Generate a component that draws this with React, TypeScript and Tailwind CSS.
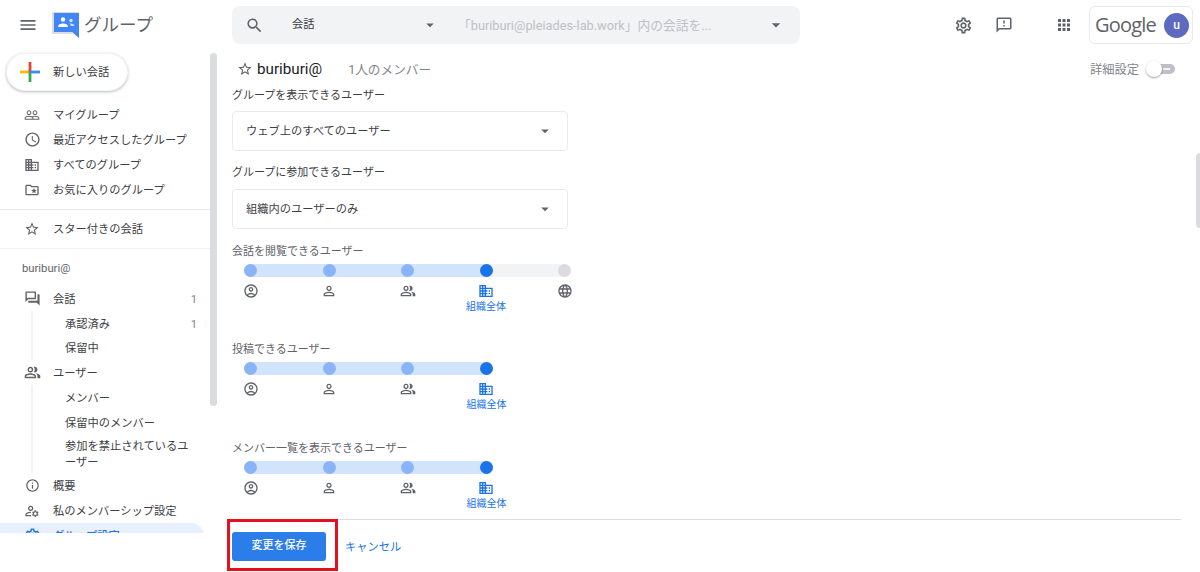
import React from 'react'
import {
  MdMenu, MdPeopleOutline, MdAccessTime, MdBusiness, MdOutlineFolderSpecial, MdStarBorder,
  MdOutlineForum, MdOutlinePeopleAlt, MdInfoOutline, MdOutlineManageAccounts, MdOutlineSettings,
  MdSearch, MdArrowDropDown, MdOutlineFeedback, MdApps, MdOutlineAccountCircle, MdPersonOutline,
  MdLanguage, MdDomain,
} from 'react-icons/md'

const font = { fontFamily: '"Roboto", "Noto Sans CJK JP", sans-serif' }

function NavRow({ icon, label, count, active }: { icon?: React.ReactNode; label: string; count?: string; active?: boolean }) {
  return (
    <div className={`flex h-[25px] items-center rounded-r-full pl-[23px] text-[11.25px] ${active ? 'mr-[6px] bg-[#e8f0fe] pr-[7px] font-medium text-[#1a73e8]' : 'pr-[13px] text-[#3c4043]'}`}>
      <span className={`flex w-[18px] shrink-0 justify-center ${active ? 'text-[#1a73e8]' : 'text-[#5f6368]'}`}>{icon}</span>
      <span className="ml-[12px] flex-1 pt-[4px]">{label}</span>
      {count && <span className="pt-[4px] text-[#80868b]">{count}</span>}
    </div>
  )
}

function SubNav({ items }: { items: { label: string; count?: string }[] }) {
  return (
    <div className="ml-[31px] border-l-2 border-[#f1f3f4] pl-[32px] pr-[13px]">
      {items.map((item) => (
        <div key={item.label} className="flex min-h-[24.6px] items-center py-[2px] text-[11.25px] leading-[16px] text-[#3c4043]">
          <span className="flex-1 pt-[3px]">{item.label}</span>
          {item.count && <span className="pt-[3px] text-[#80868b]">{item.count}</span>}
        </div>
      ))}
    </div>
  )
}

function Sidebar() {
  return (
    <aside className="flex h-[483px] w-[218px] shrink-0">
      <div className="w-[210px] overflow-hidden">
        <button className="ml-[6px] mt-[3px] flex h-[38px] w-[122px] items-center rounded-full border border-[#f1f3f4] bg-white pl-[13px] text-[11.25px] text-[#3c4043] shadow-[0_1px_3px_rgba(60,64,67,0.35)]">
          <svg width="20" height="20" viewBox="0 0 20 20" className="mr-[13px]">
            <rect x="0" y="8.6" width="10" height="2.8" fill="#fbbc04" />
            <rect x="8.6" y="0" width="2.8" height="10" fill="#ea4335" />
            <rect x="8.6" y="10" width="2.8" height="10" fill="#34a853" />
            <rect x="10" y="8.6" width="10" height="2.8" fill="#4285f4" />
          </svg>
          <span className="pt-[2px]">新しい会話</span>
        </button>
        <div className="mt-[11px]">
          <NavRow icon={<MdPeopleOutline size={16} />} label="マイグループ" />
          <NavRow icon={<MdAccessTime size={17} />} label="最近アクセスしたグループ" />
          <NavRow icon={<MdBusiness size={16} />} label="すべてのグループ" />
          <NavRow icon={<MdOutlineFolderSpecial size={16} />} label="お気に入りのグループ" />
        </div>
        <div className="mt-[7px] border-t border-[#e8eaed] pt-[6px]">
          <NavRow icon={<MdStarBorder size={16} />} label="スター付きの会話" />
        </div>
        <div className="mt-[7px] border-t border-[#f1f3f4] pl-[22px] pt-[13px] text-[11.25px] leading-[14px] text-[#5f6368]">buriburi@</div>
        <div className="mt-[10px]">
          <NavRow icon={<MdOutlineForum size={17} />} label="会話" count="1" />
          <SubNav items={[{ label: '承認済み', count: '1' }, { label: '保留中' }]} />
          <NavRow icon={<MdOutlinePeopleAlt size={17} />} label="ユーザー" />
          <SubNav items={[{ label: 'メンバー' }, { label: '保留中のメンバー' }, { label: '参加を禁止されているユーザー' }]} />
          <NavRow icon={<MdInfoOutline size={15} />} label="概要" />
          <NavRow icon={<MdOutlineManageAccounts size={16} />} label="私のメンバーシップ設定" />
          <NavRow icon={<MdOutlineSettings size={17} />} label="グループ設定" active />
        </div>
      </div>
      <div className="mt-[3px] h-[353px] w-[7px] rounded-full bg-[#dadce0]" />
    </aside>
  )
}

function Header() {
  return (
    <header className="flex h-[50px] shrink-0 items-center">
      <div className="flex w-[232px] shrink-0 items-center">
        <MdMenu size={20} className="ml-[18px] text-[#5f6368]" />
        <svg width="27" height="26" viewBox="0 0 27 26" className="ml-[14px]">
          <path d="M0 0h27v20h-7v2H0z" fill="#dadce0" />
          <path d="M2 1h25v25l-7-6H2z" fill="#4285f4" />
          <circle cx="11" cy="7.500" r="2.200" fill="#fff" />
          <path d="M6 15c0-2.500 2.500-3.500 5-3.500s5 1 5 3.500z" fill="#fff" />
          <circle cx="19" cy="8.500" r="1.700" fill="#d2e3fc" />
          <path d="M17.500 11.500c2.500-.3 5 .5 5 2.500h-3.500c-.2-1-.7-1.800-1.500-2.500z" fill="#d2e3fc" />
        </svg>
        <span className="ml-[5px] pt-[1px] text-[17.5px] text-[#5f6368]">グループ</span>
      </div>
      <div className="flex h-[38px] w-[568px] items-center rounded-lg bg-[#f1f3f4]">
        <MdSearch size={19} className="ml-[13px] text-[#5f6368]" />
        <span className="ml-[28px] w-[129px] pt-[1px] text-[11.25px] text-[#3c4043]">会話</span>
        <MdArrowDropDown size={18} className="text-[#5f6368]" />
        <span className="ml-[19px] w-[308px] whitespace-nowrap pt-[1px] text-[12.75px] text-[#bdc1c6]">「buriburi@pleiades-lab.work」内の会話を...</span>
        <MdArrowDropDown size={20} className="text-[#5f6368]" />
      </div>
      <MdOutlineSettings size={19} className="ml-[154px] text-[#5f6368]" />
      <MdOutlineFeedback size={18} className="ml-[22px] text-[#5f6368]" />
      <MdApps size={18} className="ml-[42px] text-[#5f6368]" />
      <div className="ml-[16px] flex h-[38px] w-[104px] items-center rounded-md border border-[#e8eaed] pl-[5px]">
        <span className="text-[20px] tracking-[-0.8px] text-[#5f6368]" style={{ fontFamily: '"Open Sans", sans-serif' }}>Google</span>
        <span className="ml-auto mr-[3px] flex h-[25px] w-[25px] items-center justify-center rounded-full bg-[#5c6bc0] text-[12px] font-medium text-white">u</span>
      </div>
    </header>
  )
}

function Select({ value, className }: { value: string; className: string }) {
  return (
    <div className={`flex h-[40px] w-[336px] items-center rounded border border-[#e8eaed] pl-[13px] pr-[13px] text-[11.25px] text-[#3c4043] ${className}`}>
      <span className="flex-1 pt-[3px]">{value}</span>
      <MdArrowDropDown size={18} className="text-[#5f6368]" />
    </div>
  )
}

function Stop({ icon, label, state }: { icon: React.ReactNode; label?: string; state: 'past' | 'current' | 'off' }) {
  const dot = state === 'current' ? 'bg-[#1a73e8]' : state === 'past' ? 'bg-[#8ab4f8]' : 'bg-[#dadce0]'
  return (
    <div className="flex w-[13px] flex-col items-center">
      <span className={`h-[13px] w-[13px] shrink-0 rounded-full ${dot}`} />
      <span className={`mt-[6px] flex h-[16px] shrink-0 ${state === 'current' ? 'text-[#1a73e8]' : 'text-[#5f6368]'}`}>{icon}</span>
      {label && <span className="mt-[2px] whitespace-nowrap text-[10px] leading-[12px] text-[#1a73e8]">{label}</span>}
    </div>
  )
}

function AccessSlider({ label, open, className }: { label: string; open?: boolean; className: string }) {
  return (
    <div className={className}>
      <div className="pt-[1px] text-[11px] leading-[14px] text-[#5f6368]">{label}</div>
      <div className="relative ml-[12px] mt-[5px] h-[49px] w-[327px]">
        <div className={`absolute left-0 top-0 h-[13px] rounded-full ${open ? 'w-[327px] bg-[#f1f3f4]' : 'w-[249px] bg-[#d2e3fc]'}`}>
          {open && <div className="h-full w-[249px] rounded-full bg-[#d2e3fc]" />}
        </div>
        <div className={`relative flex justify-between ${open ? 'w-[327px]' : 'w-[249px]'}`}>
          <Stop state="past" icon={<MdOutlineAccountCircle size={16} />} />
          <Stop state="past" icon={<MdPersonOutline size={16} />} />
          <Stop state="past" icon={<MdOutlinePeopleAlt size={16} />} />
          <Stop state="current" icon={<MdDomain size={16} />} label="組織全体" />
          {open && <Stop state="off" icon={<MdLanguage size={16} />} />}
        </div>
      </div>
    </div>
  )
}

function Settings() {
  return (
    <main className="flex min-w-0 flex-1 flex-col pr-[19px]">
      <div className="flex h-[37px] shrink-0 items-center pt-[1px]">
        <MdStarBorder size={16} className="ml-[5px] text-[#5f6368]" />
        <span className="ml-[4px] text-[15.2px] text-[#202124]">buriburi@</span>
        <span className="ml-[26px] pt-[2px] text-[12.65px] text-[#80868b]">1人のメンバー</span>
        <span className="ml-auto pt-[2px] text-[12.25px] text-[#80868b]">詳細設定</span>
        <span className="relative ml-[8px] mr-[6px] h-[10px] w-[28px] rounded-full bg-[#bdc1c6]">
          <span className="absolute left-[16px] top-[4px] h-[1.500px] w-[7px] bg-[#f1f3f4]" />
          <span className="absolute -left-[1px] -top-[3px] h-[16px] w-[16px] rounded-full bg-white shadow-[0_1px_2px_rgba(60,64,67,0.5)]" />
        </span>
      </div>
      <div className="h-[432px] shrink-0 overflow-hidden">
        <div className="mt-[2px] text-[11px] leading-[14px] text-[#3c4043]">グループを表示できるユーザー</div>
        <Select value="ウェブ上のすべてのユーザー" className="mt-[8px]" />
        <div className="mt-[15px] text-[11px] leading-[14px] text-[#3c4043]">グループに参加できるユーザー</div>
        <Select value="組織内のユーザーのみ" className="mt-[9px]" />
        <AccessSlider label="会話を閲覧できるユーザー" open className="mt-[15px]" />
        <AccessSlider label="投稿できるユーザー" className="mt-[29px]" />
        <AccessSlider label="メンバー一覧を表示できるユーザー" className="mt-[30px]" />
      </div>
      <div className="flex flex-1 items-start border-t border-[#dadce0] pt-[12px]">
        <button className="h-[29px] w-[94px] rounded-[3px] bg-[#2b7de9] text-[11px] font-medium text-white">変更を保存</button>
        <span className="ml-[19px] mt-[8px] text-[11.25px] text-[#1a73e8]">キャンセル</span>
      </div>
    </main>
  )
}

export default function App() {
  return (
    <div className="relative flex h-[572px] w-[1200px] flex-col overflow-hidden bg-white" style={font}>
      <Header />
      <div className="flex flex-1">
        <Sidebar />
        <div className="w-[14px] shrink-0" />
        <Settings />
      </div>
      {/* red annotation around the save button */}
      <div className="absolute left-[227px] top-[519px] h-[52px] w-[111px] border-[3px] border-[#e60f1e]" />
      <div className="absolute right-0 top-[153px] h-[75px] w-[4px] rounded-l-full bg-[#dadce0]" />
    </div>
  )
}
